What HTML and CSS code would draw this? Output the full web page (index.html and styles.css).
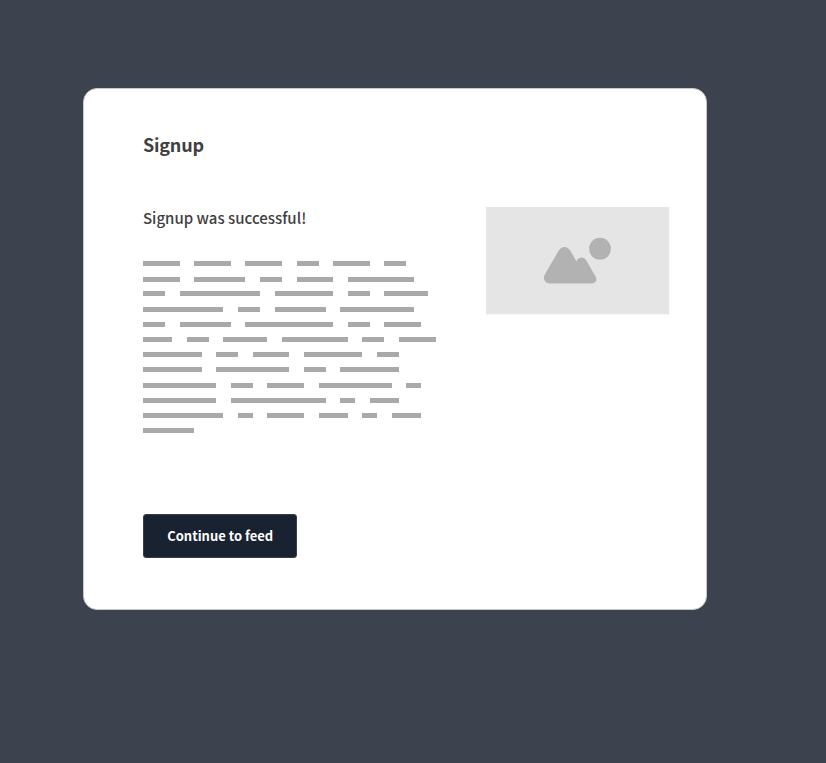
FILE: index.html
```html
<!DOCTYPE html>
<html lang="en">
<head>
<meta charset="utf-8">
<title>Signup</title>
<link rel="stylesheet" href="styles.css">
</head>
<body>
<main class="card">
  <h1 class="title">Signup</h1>
  <div class="content">
    <section class="message">
      <h2 class="subtitle">Signup was successful!</h2>
      <div class="lines">
        <div class="line loose"><i class="w5"></i><i class="w5"></i><i class="w5"></i><i class="w3"></i><i class="w5"></i><i class="w3"></i></div>
        <div class="line tight"><i class="w5"></i><i class="w7"></i><i class="w3"></i><i class="w5"></i><i class="w9"></i></div>
        <div class="line loose"><i class="w3"></i><i class="w11"></i><i class="w8"></i><i class="w3"></i><i class="w6"></i></div>
        <div class="line"><i class="w11"></i><i class="w3"></i><i class="w7"></i><i class="w10"></i></div>
        <div class="line"><i class="w3"></i><i class="w7"></i><i class="w12"></i><i class="w3"></i><i class="w5"></i></div>
        <div class="line"><i class="w4"></i><i class="w3"></i><i class="w6"></i><i class="w9"></i><i class="w3"></i><i class="w5"></i></div>
        <div class="line"><i class="w8"></i><i class="w3"></i><i class="w5"></i><i class="w8"></i><i class="w3"></i></div>
        <div class="line loose"><i class="w8"></i><i class="w10"></i><i class="w3"></i><i class="w8"></i></div>
        <div class="line"><i class="w10"></i><i class="w3"></i><i class="w5"></i><i class="w10"></i><i class="w2"></i></div>
        <div class="line"><i class="w10"></i><i class="w13"></i><i class="w2"></i><i class="w4"></i></div>
        <div class="line"><i class="w11"></i><i class="w2"></i><i class="w5"></i><i class="w4"></i><i class="w2"></i><i class="w4"></i></div>
        <div class="line"><i class="w7"></i></div>
      </div>
    </section>
    <svg class="picture" viewBox="0 0 184 108" aria-hidden="true">
      <rect width="183.2" height="107.3" fill="#e5e5e5"/>
      <g fill="#b2b2b2">
        <circle cx="114" cy="41.7" r="10.9"/>
        <path d="M58.8 67.5L72.8 43.6C76 38.9 81.2 38.9 84.2 43.6L90.4 54.2C93 49.5 97.6 49.3 100.2 53.3L109.8 70C111.6 73.5 109.5 76.4 106 76.4H64C59 76.4 56.6 72 58.8 67.5Z"/>
      </g>
    </svg>
  </div>
  <button class="button" type="button">Continue to feed</button>
</main>
</body>
</html>
```
FILE: styles.css
```css
* { box-sizing: border-box; }
body {
  margin: 0;
  min-height: 763px;
  padding: 88px 0 0 82.6px;
  background: #3c434e;
  color: #404040;
  font-family: "Noto Sans CJK SC", "Noto Sans", sans-serif;
}
.card {
  width: 624.6px;
  height: 522px;
  padding: 41px 36px 0 59.4px;
  border: 1px solid #c5c7ca;
  border-radius: 14px;
  background: #fff;
}
.title {
  margin: 0;
  font-size: 18px;
  letter-spacing: -0.2px;
  font-weight: 700;
  line-height: 28px;
}
.content {
  display: flex;
  justify-content: space-between;
  margin-top: 49px;
  height: 307px;
}
.message { width: 300px; }
.subtitle {
  margin: -1px 0 0;
  font-size: 15px;
  font-weight: 500;
  line-height: 24px;
}
.lines { margin-top: 31px; }
.line {
  display: flex;
  gap: 14.63px;
  height: 5px;
  margin-bottom: 10px;
}
.loose { margin-bottom: 11px; }
.tight { margin-bottom: 9px; }
.line i { background: #a9a9a9; }
.w2 { width: 14.63px; }
.w3 { width: 21.95px; }
.w4 { width: 29.26px; }
.w5 { width: 36.58px; }
.w6 { width: 43.89px; }
.w7 { width: 51.21px; }
.w8 { width: 58.52px; }
.w9 { width: 65.84px; }
.w10 { width: 73.15px; }
.w11 { width: 80.47px; }
.w12 { width: 87.78px; }
.w13 { width: 95.1px; }
.picture {
  flex: none;
  width: 184px;
  height: 108px;
}
.button {
  display: block;
  width: 154.4px;
  height: 44px;
  padding: 0;
  border: 1px solid #35404d;
  border-radius: 3px;
  background: #192231;
  color: #fff;
  font: 700 13px/40px "Noto Sans CJK SC", "Noto Sans", sans-serif;
}
```
